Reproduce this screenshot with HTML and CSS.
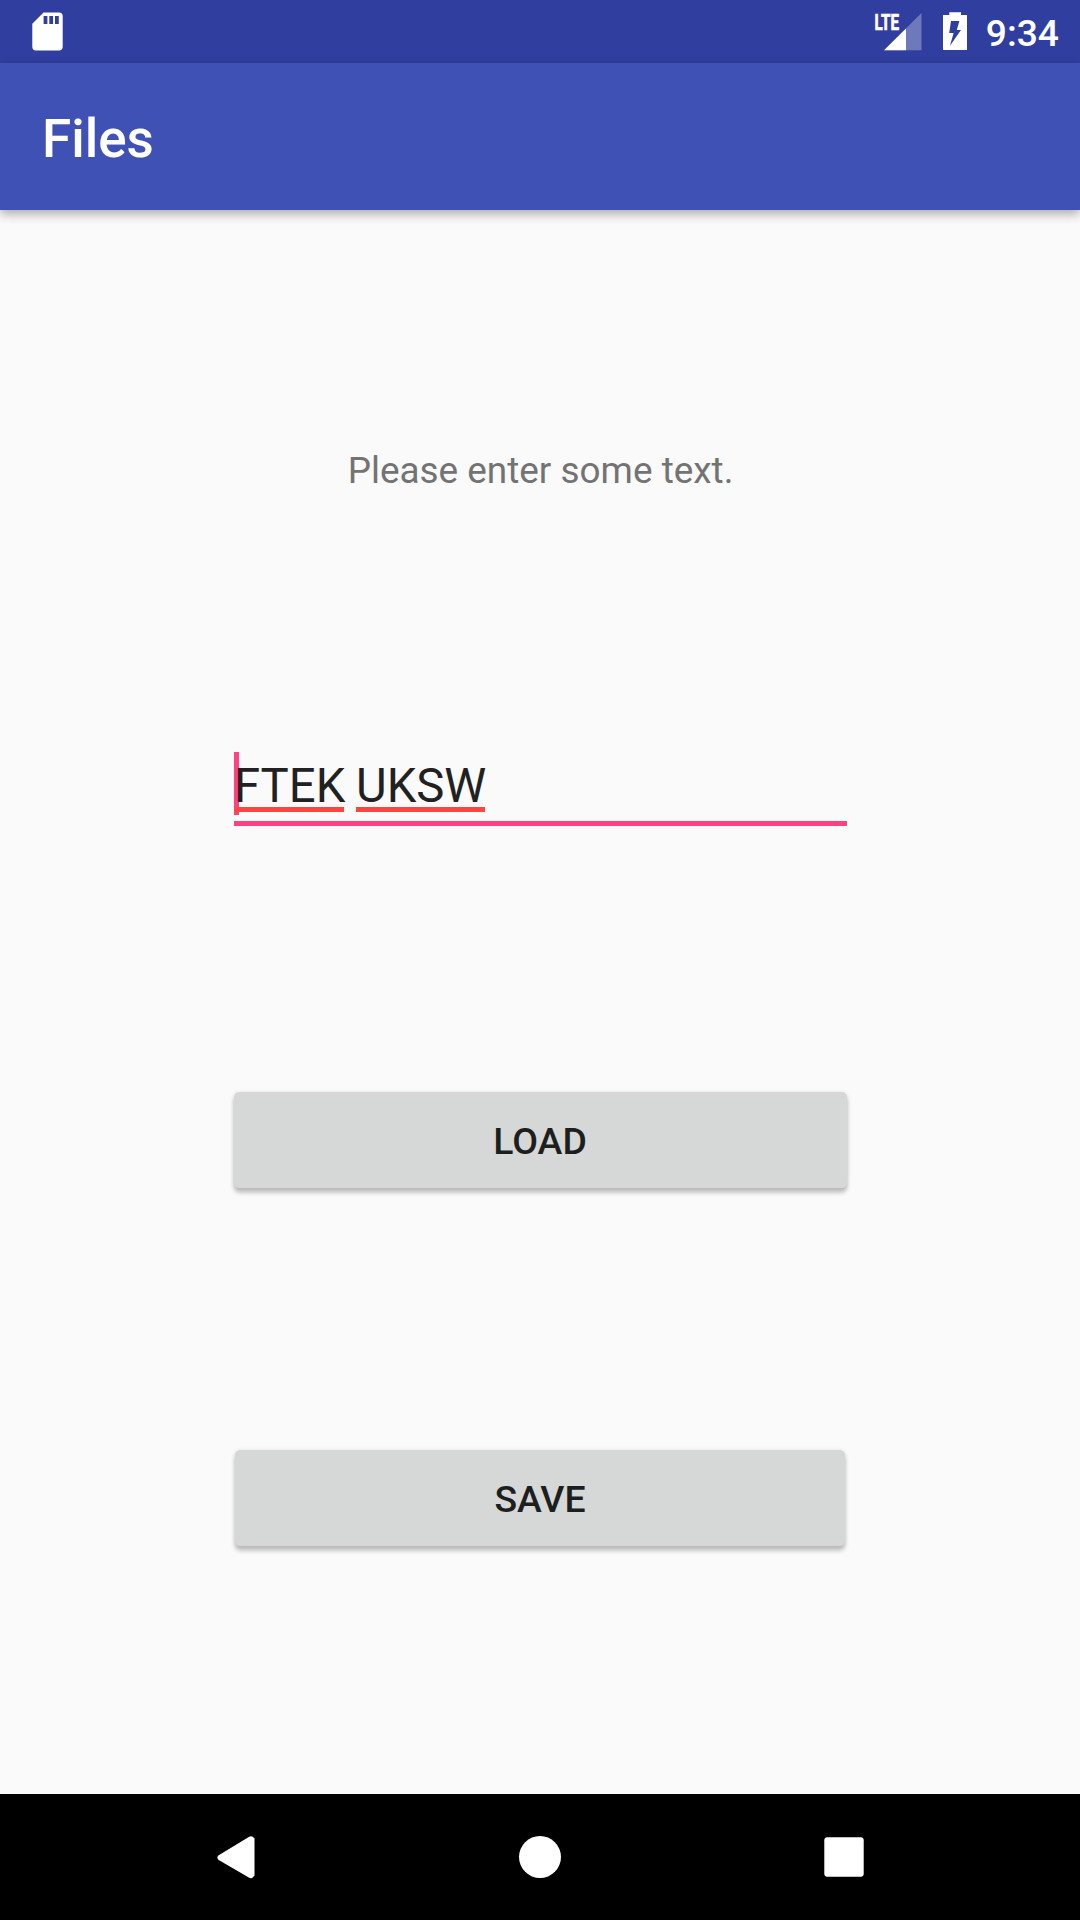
FILE: index.html
```html
<!DOCTYPE html>
<html lang="en">
<head>
<meta charset="utf-8">
<title>Files</title>
<link rel="stylesheet" href="styles.css">
</head>
<body>
<div class="screen">
  <div class="status-bar">
    <svg class="sd-icon" width="31" height="39" viewBox="32 12 31 39"><path fill="#fff" fill-rule="evenodd" d="M43.5 12.5H59a3.7 3.7 0 0 1 3.7 3.7v30.6a3.7 3.7 0 0 1-3.7 3.7H36a3.7 3.7 0 0 1-3.7-3.7V23.7zM43.6 16v8h3.8v-8zM49.3 16v8h3.8v-8zM55 16v8h3.8v-8z"/></svg>
    <div class="status-right">
      <svg class="signal-icon" width="52" height="45" viewBox="870 6 52 45">
        <path fill="#fff" fill-opacity=".3" d="M884 50.3 921.5 13v37.3z"/>
        <path fill="#fff" d="M884 50.3 906 28.4v21.9z"/>
        <text class="lte" x="874.6" y="29.5" textLength="24.4" lengthAdjust="spacingAndGlyphs">LTE</text>
      </svg>
      <svg class="battery-icon" width="24" height="39" viewBox="943 12 24 39"><path fill="#fff" fill-rule="evenodd" d="M949.3 12.2h11.7V15h6v35h-24V15h6.3zM951 21 949.2 33h4.4L950 45.7 961 30h-4.2l2.6-9z"/></svg>
      <span class="clock">9:34</span>
    </div>
  </div>
  <header class="app-bar"><h1>Files</h1></header>
  <main class="content">
    <p class="prompt">Please enter some text.</p>
    <div class="field"><span class="word">FTEK</span><span class="word second">UKSW</span><i class="caret"></i></div>
    <button class="btn load">LOAD</button>
    <button class="btn save">SAVE</button>
  </main>
  <nav class="nav-bar">
    <svg width="38" height="43" viewBox="0 0 38 43"><path fill="#fff" d="M1.3 19.4 32.2.8Q35 -.6 37.5 2.5V39.5Q35 43.3 32.2 41.8L1.3 23.8Q-.5 21.6 1.3 19.4z"/></svg>
    <svg width="42" height="42" viewBox="0 0 42 42"><circle cx="21" cy="21" r="21" fill="#fff"/></svg>
    <svg width="40" height="40" viewBox="0 0 40 40"><rect x=".3" y=".3" width="39.4" height="39.4" rx="3" fill="#fff"/></svg>
  </nav>
</div>
</body>
</html>
```
FILE: styles.css
```css
* { box-sizing: border-box; margin: 0; padding: 0; }
body { font-family: Roboto, "Noto Sans", sans-serif; background: #fafafa; }
.screen { width: 1080px; height: 1920px; display: flex; flex-direction: column; overflow: hidden; }
svg { display: block; flex: none; }

.status-bar { height: 63px; flex: none; background: #303f9f; display: flex; justify-content: space-between; padding: 0 21px 0 32px; }
.sd-icon, .battery-icon { margin-top: 12px; }
.signal-icon { margin-top: 6px; overflow: visible; }
.status-right { display: flex; }
.battery-icon { margin-left: 21px; }
.lte { font: 700 21.5px/1 Roboto, sans-serif; fill: #fff; stroke: #fff; stroke-width: .7px; }
.clock { margin-left: 19px; margin-top: 11px; font-size: 37.2px; line-height: 44px; font-weight: 500; color: #fff; }

.app-bar { height: 147px; flex: none; background: #3f51b5; padding: 45px 42px 0; position: relative; box-shadow: 0 4px 10px rgba(0,0,0,.32); }
.app-bar h1 { font-size: 53px; line-height: 62px; font-weight: 500; color: #fff; }

.content { flex: 1; display: flex; flex-direction: column; align-items: center; }
.prompt { margin-top: 239px; padding-left: 1px; font-size: 36.9px; line-height: 44px; color: #737373; }
.field { position: relative; width: 613px; height: 74px; margin-top: 259px; display: flex; padding-top: 8px; border-bottom: 5px solid #ff4081; color: #212121; font-size: 47.25px; }
.word { position: relative; z-index: 1; height: 52px; width: 110px; border-bottom: 5px solid #ff4444; line-height: 53px; text-indent: .5px; }
.word.second { width: 129px; margin-left: 12px; }
.caret { position: absolute; left: 0; top: 0; width: 5px; height: 63px; background: #ff4081; }
.btn { width: 613px; height: 96px; flex: none; border: 0; padding-top: 1px; border-radius: 5px; background: #d6d8d7; color: #1d1e1e; font: 500 37.4px/44px Roboto, "Noto Sans", sans-serif; box-shadow: 0 5px 4px rgba(0,0,0,.2), 0 1px 5px rgba(0,0,0,.12); }
.load { margin-top: 266px; }
.save { width: 610px; margin-top: 262px; }

.nav-bar { height: 126px; flex: none; background: #000; display: flex; align-items: center; padding: 0 216px 0 217px; justify-content: space-between; }
```
